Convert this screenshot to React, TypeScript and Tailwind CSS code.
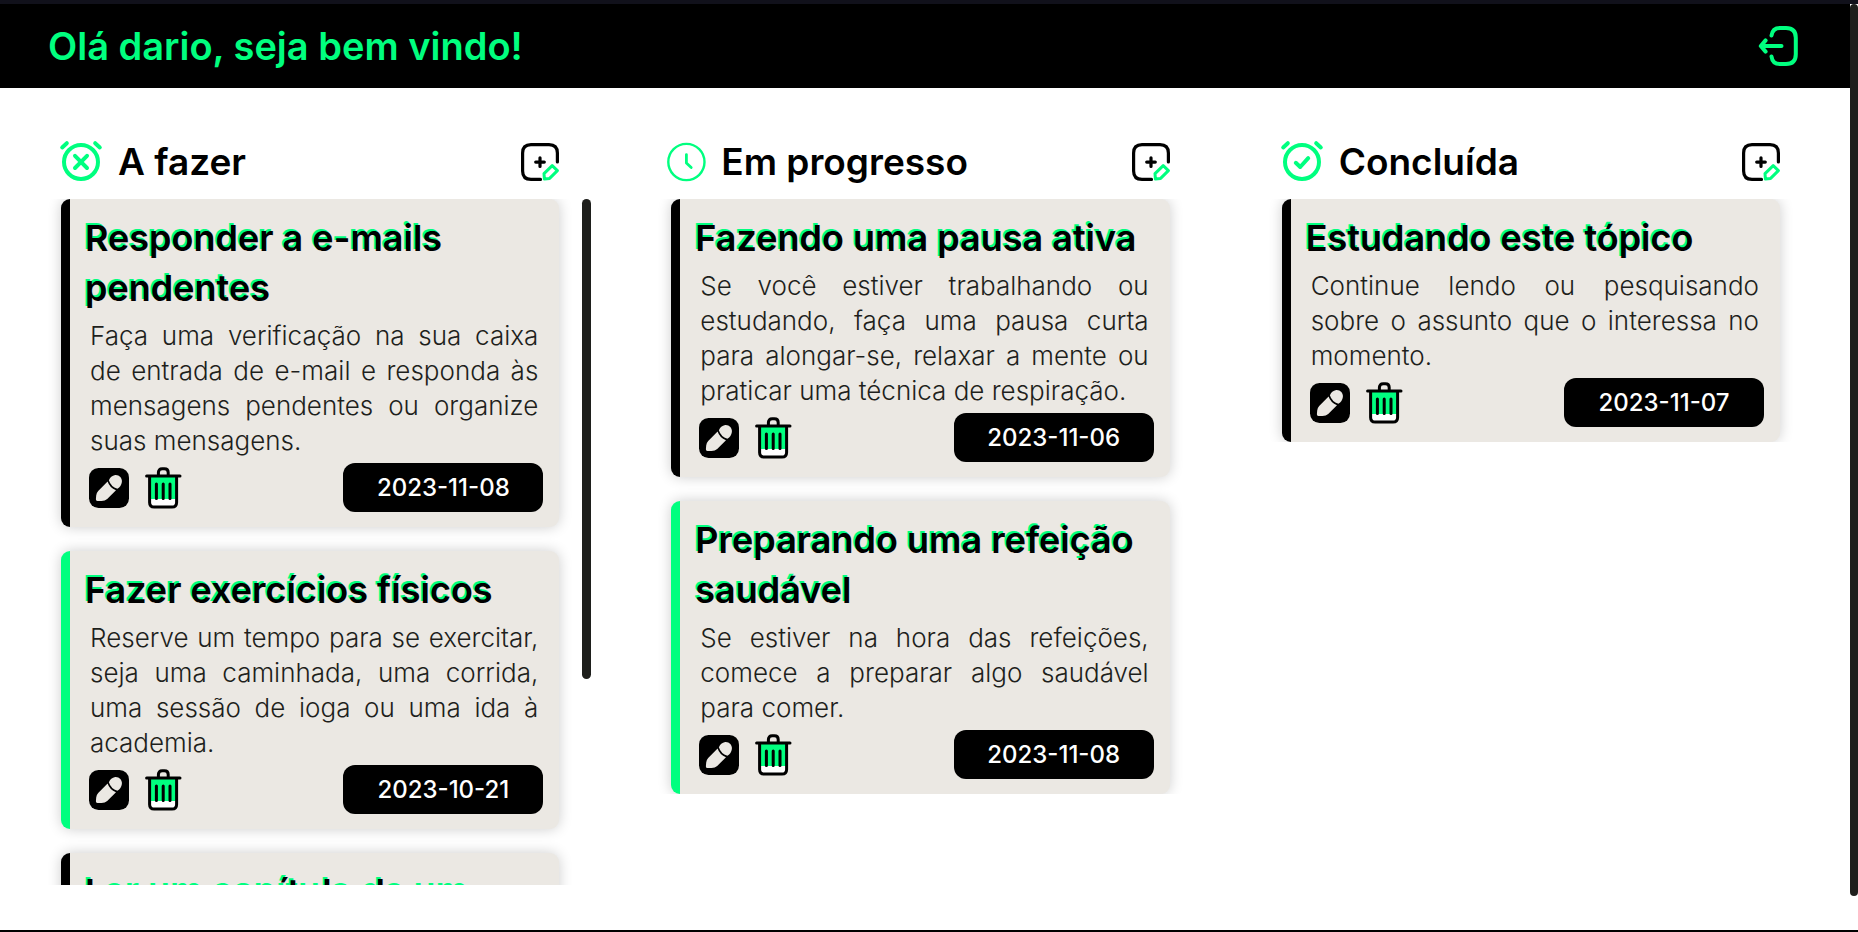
import type { ReactNode } from "react";

type Task = { title: string; text: string; date: string; accent: "black" | "green" };
type Column = { title: string; icon: ReactNode; tasks: Task[]; scrollable?: boolean };

const GREEN = "#00ff7f";

function Alarm({ children }: { children: ReactNode }) {
  return (
    <svg className="-ml-px h-[42px] w-[42px] shrink-0 overflow-visible" viewBox="0 0 42 42" fill="none" stroke={GREEN} strokeWidth="4" strokeLinecap="round" strokeLinejoin="round" aria-hidden="true">
      <circle cx="21" cy="21" r="17" />
      <path d="M2.2 6.4 6.8 2.2M39.8 6.4 35.2 2.2" />
      {children}
    </svg>
  );
}

function ClockIcon() {
  return (
    <svg className="-ml-1 h-[40px] w-[38px] shrink-0 overflow-visible" viewBox="0 0 38 40" fill="none" stroke={GREEN} strokeLinecap="round" strokeLinejoin="round" aria-hidden="true">
      <circle cx="19.4" cy="20" r="18.1" strokeWidth="2.4" />
      <path d="M19.4 12.6V21l4.8 4.6" strokeWidth="2.8" />
    </svg>
  );
}

function AddIcon() {
  return (
    <svg className="h-[38px] w-[38px]" viewBox="0 0 38 38" fill="none" strokeLinecap="round" strokeLinejoin="round" aria-hidden="true">
      <path d="M36.4 19V10q0-8.4-8.4-8.4H10Q1.6 1.6 1.6 10v18q0 8.4 8.4 8.4h9.5M19 14.8v8.6M14.7 19.1h8.6" stroke="#000" strokeWidth="3.2" />
      <path d="M31.2 22.6 36.4 27.6 28.6 35.4 23.4 36 23 30.6Z" stroke={GREEN} strokeWidth="3" />
    </svg>
  );
}

function LogoutIcon() {
  return (
    <svg className="h-[40px] w-[40px]" viewBox="0 0 40 40" fill="none" stroke={GREEN} strokeWidth="4" strokeLinecap="round" strokeLinejoin="round" aria-hidden="true">
      <path d="M13.5 9.6Q14.5 2 22 2h6q9.8 0 9.8 9.8v16.4q0 9.8-9.8 9.8h-6q-7.5 0-8.5-7.6M23.5 20H3M7.6 14.4 2.8 20l4.8 5.6" />
    </svg>
  );
}

function EditIcon() {
  return (
    <svg className="h-[40px] w-[40px]" viewBox="0 0 40 40" aria-hidden="true">
      <rect width="40" height="40" rx="9.5" fill="#000" />
      <g fill="#ebe8e3">
        <path d="M18.6 13.4Q20.6 19.6 27 22.2L18.2 31Q16 33 12.5 33H8.4Q6.8 33 6.9 31.3L7.2 27.4Q7.4 25 9.2 23Z" />
        <path d="M19.9 12.2Q21.6 8 26.2 7.1C30.2 6.8 33.2 10 32.9 14Q32.2 18.6 28.4 20.8 21.8 18.6 19.9 12.2Z" />
      </g>
    </svg>
  );
}

function TrashIcon() {
  return (
    <svg className="h-[42px] w-[37px]" viewBox="0 0 37 42" fill="none" stroke="#000" strokeWidth="3" strokeLinecap="round" strokeLinejoin="round" aria-hidden="true">
      <path d="M4.6 9h27v26q0 5-5 5h-17q-5 0-5-5Z" fill="#fff" stroke="none" />
      <path d="M4.6 9h27v23h-27Z" fill={GREEN} stroke="none" />
      <path d="M1.6 9h33.4M4.6 9v26.5q0 4.6 4.6 4.6h17.8q4.6 0 4.6-4.6V9M13.4 8V5.6q0-3.8 3.8-3.8h2.2q3.8 0 3.8 3.8V8M11.4 17v14.6M18.2 17v14.6M25 17v14.6" />
    </svg>
  );
}

const columns: Column[] = [
  {
    title: "A fazer",
    icon: <Alarm><path d="M15 14.8 27 27M27 14.8 15 27" /></Alarm>,
    scrollable: true,
    tasks: [
      { title: "Responder a e-mails pendentes", text: "Faça uma verificação na sua caixa de entrada de e-mail e responda às mensagens pendentes ou organize suas mensagens.", date: "2023-11-08", accent: "black" },
      { title: "Fazer exercícios físicos", text: "Reserve um tempo para se exercitar, seja uma caminhada, uma corrida, uma\u00a0sessão de ioga ou uma ida à academia.", date: "2023-10-21", accent: "green" },
      { title: "Ler um capítulo de um livro de ficção", text: "Escolha um livro e leia um capítulo com calma.", date: "2023-11-08", accent: "black" },
    ],
  },
  {
    title: "Em progresso",
    icon: <ClockIcon />,
    tasks: [
      { title: "Fazendo uma pausa ativa", text: "Se você estiver trabalhando ou estudando, faça uma pausa curta para\u00a0alongar-se, relaxar a mente ou praticar uma técnica de respiração.", date: "2023-11-06", accent: "black" },
      { title: "Preparando uma refeição saudável", text: "Se estiver na hora das refeições, comece a preparar algo saudável para\u00a0comer.", date: "2023-11-08", accent: "green" },
    ],
  },
  {
    title: "Concluída",
    icon: <Alarm><path d="M14.8 21.8 19.2 26 27.2 17.2" /></Alarm>,
    tasks: [
      { title: "Estudando este tópico", text: "Continue lendo ou pesquisando sobre\u00a0o assunto que o interessa no momento.", date: "2023-11-07", accent: "black" },
    ],
  },
];

function Card({ task }: { task: Task }) {
  return (
    <article className={`shrink-0 rounded-[9px] border-l-[9px] bg-[#ebe8e3] pt-[14px] pr-4 pb-[15px] pl-[15px] shadow-[0_0_14px_rgba(0,0,0,0.2)] ${task.accent === "black" ? "border-black" : "border-[#00ff7f]"}`}>
      <h3 className="text-[36px] leading-[50px] font-semibold text-black [text-shadow:-2px_-2px_#00ff7f]">{task.title}</h3>
      <p className="mt-[5px] px-[5px] text-justify text-[26px] leading-[35px] font-light text-[#1e1f1c]">{task.text}</p>
      <div className="mt-[5px] flex items-center justify-between pl-1">
        <div className="flex items-center gap-4">
          <button type="button" aria-label="Editar"><EditIcon /></button>
          <button type="button" aria-label="Excluir"><TrashIcon /></button>
        </div>
        <time className="w-[200px] rounded-xl bg-black text-center text-[24px] leading-[49px] font-medium text-white">{task.date}</time>
      </div>
    </article>
  );
}

export default function App() {
  return (
    <div className="flex h-screen flex-col overflow-hidden border-t-4 border-b-2 border-t-[#11111b] border-b-black bg-white font-['Inter',sans-serif]">
      <div className="flex min-h-0 flex-1">
        <div className="flex min-w-0 flex-1 flex-col">
          <header className="flex h-[84px] shrink-0 items-center justify-between bg-black pr-[52px] pl-12">
            <h1 className="text-[38px] font-semibold text-[#00ff7f]">Olá dario, seja bem vindo!</h1>
            <button type="button" aria-label="Sair"><LogoutIcon /></button>
          </header>
          <main className="grid min-h-0 flex-1 grid-cols-3 gap-[80px] pt-[46px] pr-[38px] pb-[45px] pl-[61px]">
            {columns.map((column) => (
              <section key={column.title} className="flex min-h-0 flex-col">
                <div className="flex h-[56px] shrink-0 items-center justify-between pr-8">
                  <div className="flex items-center gap-4">
                    {column.icon}
                    <h2 className="text-[37px] leading-[56px] font-semibold text-black">{column.title}</h2>
                  </div>
                  <button type="button" aria-label="Adicionar tarefa"><AddIcon /></button>
                </div>
                <div className="mt-[9px] flex min-h-0">
                  <div className="-ml-4 flex min-w-0 flex-1 flex-col gap-6 overflow-hidden pr-[23px] pl-4">
                    {column.tasks.map((task) => <Card key={task.title} task={task} />)}
                  </div>
                  <div className={`w-[9px] shrink-0 rounded-full ${column.scrollable ? "h-[70%] bg-[#1e1f1c]" : ""}`} />
                </div>
              </section>
            ))}
          </main>
        </div>
        <div className="w-2 shrink-0">
          <div className="h-[calc(100%-34px)] rounded-full bg-[#1e1f1c]" />
        </div>
      </div>
    </div>
  );
}
